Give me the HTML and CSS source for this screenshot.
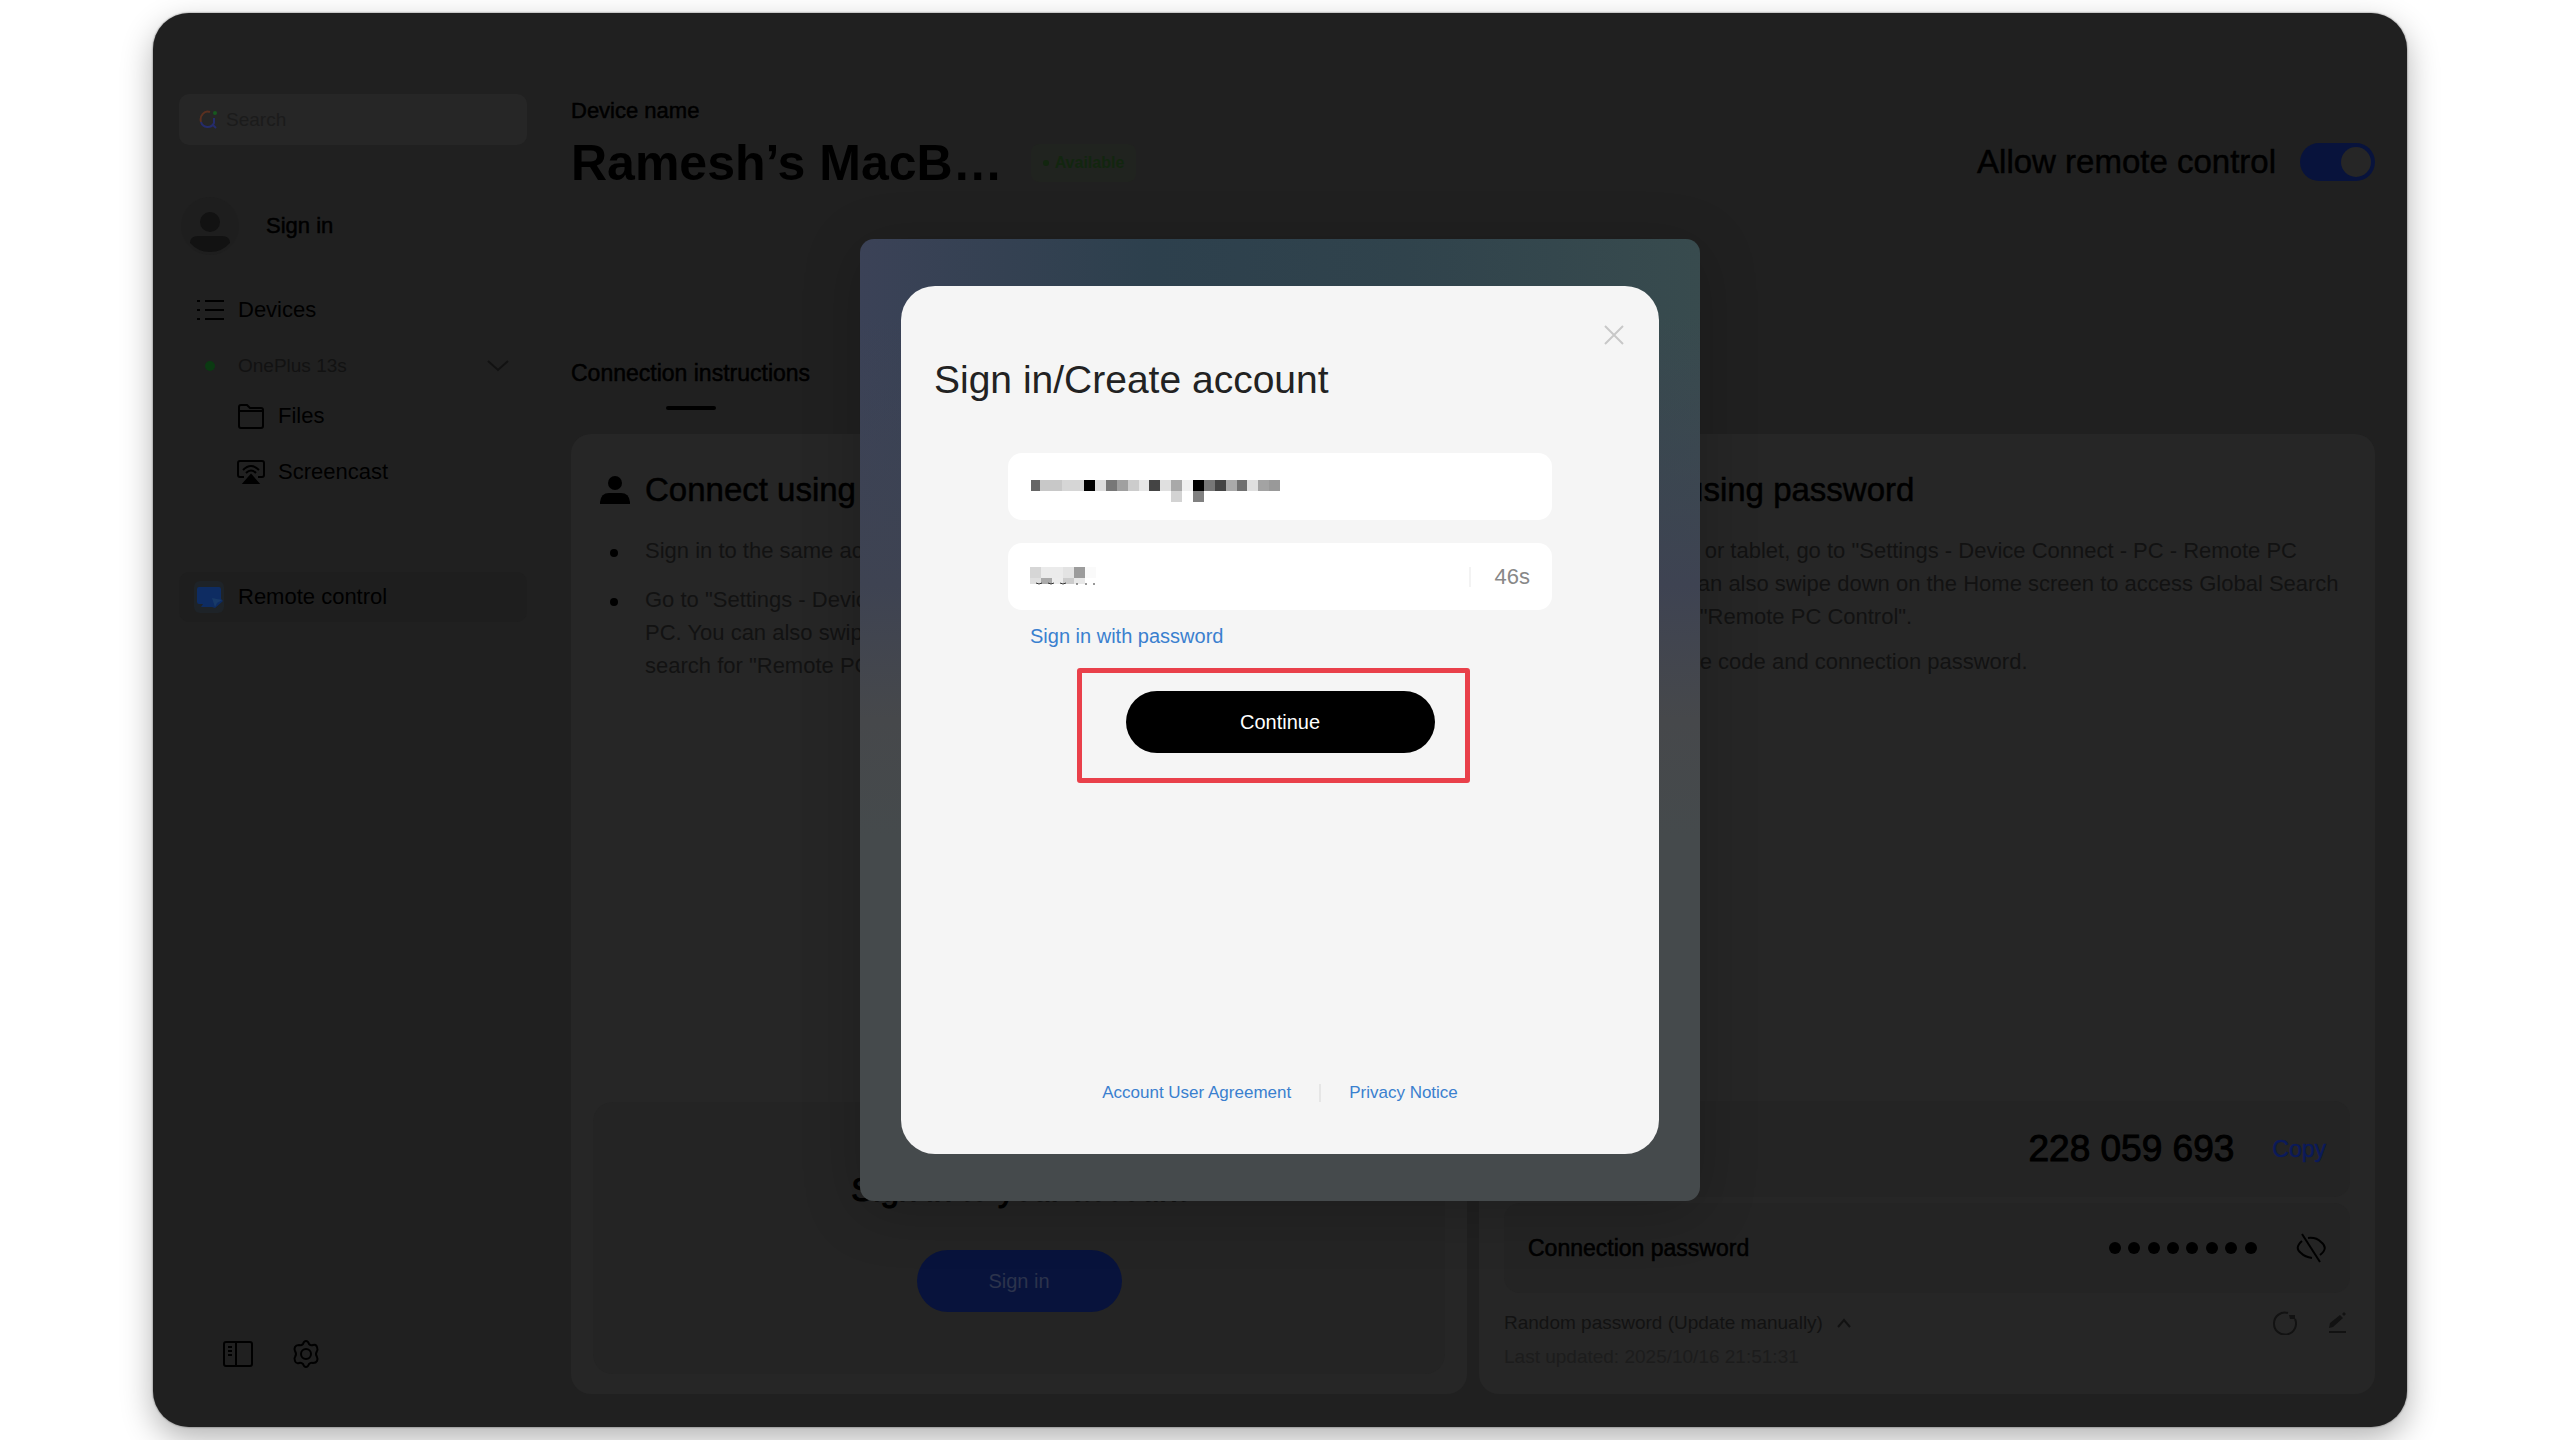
FILE: index.html
```html
<!DOCTYPE html>
<html lang="en">
<head>
    <meta charset="UTF-8">
    <meta name="viewport" content="width=device-width, initial-scale=1.0">
    <title>Remote control</title>
    <link rel="stylesheet" href="styles.css">
</head>
<body>
    <div class="window">
        <!-- Sidebar -->
        <aside class="sidebar">
            <label class="search">
                <svg width="20" height="20" viewBox="0 0 20 20" fill="none" stroke-width="2">
                    <path d="M12 2A7 8 0 0 0 3 12" stroke="#5a3020"/>
                    <path d="M3 12a7 7 0 0 0 13 1V8" stroke="#252c6b"/>
                    <path d="M15 15l3 3" stroke="#252c6b"/>
                    <circle cx="17" cy="3" r="1" stroke="#17581f"/>
                </svg>
                <input type="text" placeholder="Search" aria-label="Search">
            </label>

            <a class="account" href="#">
                <svg width="60" height="60" viewBox="0 0 60 60">
                    <circle cx="30" cy="30" r="29" fill="#1e1e1e"/>
                    <circle cx="30" cy="26" r="10" fill="#121212"/>
                    <path d="M10 47q0-7 8-7h24q8 0 8 7-8 9-20 9T10 47z" fill="#121212"/>
                </svg>
                <span>Sign in</span>
            </a>

            <nav class="menu">
                <a class="item" href="#">
                    <svg width="28" height="24" viewBox="0 0 28 24" stroke="#000" stroke-width="2">
                        <path d="M0 3h3M8 3h19M0 12h3M8 12h19M0 21h3M8 21h19"/>
                    </svg>
                    <span>Devices</span>
                </a>
                <a class="item device" href="#">
                    <i class="dot"></i>
                    <span>OnePlus 13s</span>
                    <svg class="arrow" width="22" height="12" viewBox="0 0 22 12" fill="none" stroke="#121212" stroke-width="2">
                        <path d="M1 1l10 9L21 1"/>
                    </svg>
                </a>
                <a class="item sub" href="#">
                    <svg width="28" height="26" viewBox="0 0 28 26" fill="none" stroke="#000" stroke-width="2">
                        <path d="M2 8V4q0-2 2-2h6l3 3h11q2 0 2 2v16q0 2-2 2H4q-2 0-2-2zM2 8h24"/>
                    </svg>
                    <span>Files</span>
                </a>
                <a class="item sub" href="#">
                    <svg width="28" height="26" viewBox="0 0 28 26" fill="none" stroke="#000" stroke-width="2">
                        <path d="M7 18H3q-2 0-2-2V4q0-2 2-2h22q2 0 2 2v12q0 2-2 2h-4"/>
                        <path d="M6 11q8-8 16 0M9 14q5-5 10 0"/>
                        <path d="M14 16l7 8H7z" fill="#000"/>
                    </svg>
                    <span>Screencast</span>
                </a>
                <a class="item active" href="#">
                    <svg width="32" height="32" viewBox="0 0 32 32">
                        <rect x="1" width="30" height="32" rx="6" fill="#1e2328"/>
                        <path d="M4 8q0-2 2-2h20q2 0 2 2v10l2 2-8 7-3-1H8l2-3H6q-2 0-2-2z" fill="#0e2c62"/>
                        <path d="M19 17l10 2-5 3-2 4z" fill="#183a68"/>
                    </svg>
                    <span>Remote control</span>
                </a>
            </nav>

            <div class="tools">
                <button type="button" aria-label="Toggle sidebar">
                    <svg width="30" height="28" viewBox="0 0 30 28" fill="none" stroke="#000" stroke-width="2">
                        <rect x="1" y="2" width="28" height="24" rx="2"/>
                        <path d="M13 2v24M5 7h4M5 11h4M5 15h4"/>
                    </svg>
                </button>
                <button type="button" aria-label="Settings">
                    <svg width="28" height="30" viewBox="0 0 28 30" fill="none" stroke="#000" stroke-width="2" stroke-linejoin="round">
                        <path d="M14 2q2 0 3 3 2 2 4 1 3-1 4 2t0 4q-2 3 0 6 1 2 0 4t-4 2q-2-1-4 1-1 3-3 3t-3-3q-2-2-4-1-3 1-4-2t0-4q2-3 0-6-1-2 0-4t4-2q2 1 4-1 1-3 3-3z"/>
                        <circle cx="14" cy="15" r="5"/>
                    </svg>
                </button>
            </div>
        </aside>

        <!-- Main -->
        <main class="main">
            <header class="header">
                <div>
                    <div class="label">Device name</div>
                    <div class="device-title">
                        <h1>Ramesh’s MacB…</h1>
                        <span class="badge"><i></i>Available</span>
                    </div>
                </div>
                <label class="allow">
                    <span>Allow remote control</span>
                    <input type="checkbox" checked>
                </label>
            </header>

            <div class="tabs">
                <a class="tab" href="#">Connection instructions</a>
            </div>

            <div class="cards">
                <section class="card">
                    <h2>
                        <svg width="30" height="30" viewBox="0 0 30 30">
                            <circle cx="15" cy="8" r="7"/>
                            <path d="M0 29v-2q1-9 9-9h12q8 0 9 9v2z"/>
                        </svg>
                        Connect using account
                    </h2>
                    <ul>
                        <li><p>Sign in to the same account on your phone or tablet.</p></li>
                        <li><p>Go to "Settings - Device Connect - PC - Remote<br>PC. You can also swipe down and<br>search for "Remote PC Control".</p></li>
                    </ul>
                    <div class="signin-box">
                        <h3>Sign in to your account</h3>
                        <button type="button">Sign in</button>
                    </div>
                </section>

                <section class="card card-password">
                    <h2>
                        <svg width="30" height="30" viewBox="0 0 30 30">
                            <rect x="3" y="12" width="24" height="17" rx="3"/>
                        </svg>
                        Connect using password
                    </h2>
                    <ul>
                        <li><p>On your phone or tablet, go to "Settings - Device Connect - PC - Remote PC<br>Control". You can also swipe down on the Home screen to access Global Search<br>and search for "Remote PC Control".</p></li>
                        <li><p>Enter the device code and connection password.</p></li>
                    </ul>
                    <div class="rows">
                        <div class="row row-code">
                            <span>Device code</span>
                            <strong>228 059 693</strong>
                            <button type="button" class="copy">Copy</button>
                        </div>
                        <div class="row">
                            <span>Connection password</span>
                            <svg class="mask" width="148" height="12" viewBox="0 0 148 12">
                                <circle cx="6" cy="6" r="6"/>
                                <circle cx="25" cy="6" r="6"/>
                                <circle cx="45" cy="6" r="6"/>
                                <circle cx="64" cy="6" r="6"/>
                                <circle cx="83" cy="6" r="6"/>
                                <circle cx="103" cy="6" r="6"/>
                                <circle cx="122" cy="6" r="6"/>
                                <circle cx="142" cy="6" r="6"/>
                            </svg>
                            <button type="button" aria-label="Show password">
                                <svg width="30" height="30" viewBox="0 0 30 30" fill="none" stroke="#000" stroke-width="2">
                                    <path d="M6 8Q-2 15 5 20q4 4 11 5M12 5q8-1 13 4 8 6-1 13"/>
                                    <path d="M6 1l18 28"/>
                                </svg>
                            </button>
                        </div>
                        <div class="meta">
                            <button type="button" class="random">
                                Random password (Update manually)
                                <svg width="14" height="10" viewBox="0 0 14 10" fill="none" stroke="#121212" stroke-width="2">
                                    <path d="M1 9l6-7 6 7"/>
                                </svg>
                            </button>
                            <button type="button" class="refresh" aria-label="Refresh password">
                                <svg width="24" height="24" viewBox="0 0 24 24" fill="none" stroke="#121212" stroke-width="2">
                                    <path d="M15 2A11 11 0 1 0 22 8"/>
                                    <path d="M16 4h6v4h-5z" fill="#121212" stroke="none"/>
                                </svg>
                            </button>
                            <button type="button" aria-label="Edit password">
                                <svg width="20" height="22" viewBox="0 0 20 22" fill="#121212">
                                    <path d="M2 16l1-5L13 3l3 3L6 15zM15 2l2-2 2 2-2 2z"/>
                                    <path d="M2 19h17v2H2z"/>
                                </svg>
                            </button>
                        </div>
                        <div class="updated">Last updated: 2025/10/16 21:51:31</div>
                    </div>
                </section>
            </div>
        </main>
    </div>

    <!-- Sign-in dialog -->
    <div class="overlay">
        <div class="modal" role="dialog" aria-label="Sign in/Create account">
            <form class="dialog">
                <button type="button" class="close" aria-label="Close">
                    <svg width="20" height="20" viewBox="0 0 20 20" stroke="#c8c8c8" stroke-width="2">
                        <path d="M1 1l18 18M19 1L1 19"/>
                    </svg>
                </button>
                <h2>Sign in/Create account</h2>

                <div class="field">
                    <input type="text" aria-label="Account">
                    <svg class="mosaic" width="250" height="22" viewBox="0 0 250 22" shape-rendering="crispEdges">
                        <path fill="#666" d="M0 0h9v11H0z"/>
                        <path fill="#c8c8c8" d="M9 0h22v11H9z"/>
                        <path fill="#d6d6d6" d="M31 0h22v11H31z"/>
                        <path fill="#000" d="M53 0h11v11H53z"/>
                        <path fill="#ddd" d="M64 0h11v11H64z"/>
                        <path fill="#777" d="M75 0h11v11H75z"/>
                        <path fill="#a0a0a0" d="M86 0h11v11H86z"/>
                        <path fill="#ccc" d="M97 0h11v11H97z"/>
                        <path fill="#e6e6e6" d="M108 0h10v11h-10z"/>
                        <path fill="#444" d="M118 0h11v11h-11z"/>
                        <path fill="#e0e0e0" d="M129 0h11v11h-11z"/>
                        <path fill="#a9a9a9" d="M140 0h11v11h-11z"/>
                        <path fill="#d3d3d3" d="M140 11h11v11h-11z"/>
                        <path fill="#f0f0f0" d="M151 0h11v11h-11z"/>
                        <path fill="#000" d="M162 0h11v11h-11z"/>
                        <path fill="#808080" d="M162 11h11v11h-11z"/>
                        <path fill="#777" d="M173 0h11v11h-11z"/>
                        <path fill="#444" d="M184 0h11v11h-11z"/>
                        <path fill="#aaa" d="M195 0h11v11h-11z"/>
                        <path fill="#707070" d="M206 0h10v11h-10z"/>
                        <path fill="#e0e0e0" d="M216 0h11v11h-11z"/>
                        <path fill="#a3a3a3" d="M227 0h11v11h-11z"/>
                        <path fill="#999" d="M238 0h11v11h-11z"/>
                    </svg>
                </div>

                <div class="field">
                    <input type="text" aria-label="Verification code">
                    <svg class="mosaic code" width="68" height="18" viewBox="0 0 68 18">
                        <path fill="#d6d6d6" d="M0 0h11v11H0z"/>
                        <path fill="#ebebeb" d="M11 0h22v11H11z"/>
                        <path fill="#e3e3e3" d="M33 0h11v11H33z"/>
                        <path fill="#9c9c9c" d="M44 0h11v11H44z"/>
                        <path fill="#fafafa" d="M55 0h11v11H55z"/>
                        <path fill="#e0e0e0" d="M0 11h11v6H0z"/>
                        <path fill="#aaa" d="M11 11h11v6H11z"/>
                        <path fill="#ececec" d="M22 11h11v6H22z"/>
                        <path fill="#ccc" d="M33 11h11v6H33z"/>
                        <path fill="#e8e8e8" d="M44 11h11v6H44z"/>
                        <path fill="none" stroke="#333" d="M6 16q3 2 6 0M18 16q3 2 6 0M30 16q3 2 6 0M46 17h2M55 17h2M63 17h2"/>
                    </svg>
                    <span class="countdown">46s</span>
                </div>

                <a class="switch" href="#">Sign in with password</a>

                <div class="submit">
                    <button type="submit">Continue</button>
                    <div class="highlight"></div>
                </div>

                <div class="links">
                    <a href="#">Account User Agreement</a>
                    <i></i>
                    <a href="#">Privacy Notice</a>
                </div>
            </form>
        </div>
    </div>
</body>
</html>
```

FILE: styles.css
```css
* {
    box-sizing: border-box;
    margin: 0;
    padding: 0;
    font-family: "Liberation Sans", Arial, sans-serif;
}

body {
    min-height: 100vh;
    padding: 13px 153px;
    background: #fff;
    color: #000;
    font-size: 22px;
    display: flex;
    overflow: hidden;
}

a {
    color: inherit;
    text-decoration: none;
}

button {
    background: none;
    border: none;
    color: inherit;
    font-size: 20px;
    cursor: pointer;
}

svg {
    display: block;
    flex-shrink: 0;
}

.window {
    flex: 1;
    display: flex;
    background: #202020;
    border-radius: 36px;
    box-shadow: 0 0 2px rgba(0, 0, 0, 0.6), 0 12px 32px rgba(0, 0, 0, 0.3);
}

/* sidebar */
.sidebar {
    width: 418px;
    padding: 81px 44px 58px 26px;
    display: flex;
    flex-direction: column;
}

.search {
    display: flex;
    align-items: center;
    gap: 8px;
    height: 51px;
    padding: 0 19px;
    background: #262626;
    border-radius: 10px;
}

.search input {
    width: 100%;
    border: none;
    outline: none;
    background: none;
    font-size: 19px;
}

.search input::placeholder {
    color: #1b1b1b;
}

.account {
    display: flex;
    align-items: center;
    gap: 26px;
    margin-top: 51px;
    margin-left: 1px;
    height: 60px;
    -webkit-text-stroke: 0.5px #000;
}

.menu {
    display: flex;
    flex-direction: column;
    margin-top: 28px;
}

.item {
    display: flex;
    align-items: center;
    height: 52px;
    padding-left: 18px;
    gap: 13px;
}

.item.device {
    height: 56px;
    margin-top: 2px;
    padding: 0 18px 0 26px;
    gap: 23px;
    color: #121212;
    font-size: 19px;
}

.dot {
    width: 10px;
    height: 10px;
    border-radius: 50%;
    background: #0b3a12;
}

.arrow {
    margin-left: auto;
}

.item.sub {
    height: 56px;
    padding-left: 58px;
    margin-top: -6px;
    margin-bottom: 6px;
}

.item.active {
    height: 50px;
    margin-top: 66px;
    padding-left: 14px;
    background: #1e1e1e;
    border-radius: 10px;
}

.tools {
    display: flex;
    align-items: center;
    gap: 39px;
    margin-top: auto;
    padding-left: 44px;
}

/* main */
.main {
    flex: 1;
    min-width: 0;
    padding: 84px 32px 33px 0;
    display: flex;
    flex-direction: column;
}

.header {
    display: flex;
    justify-content: space-between;
    align-items: flex-end;
}

.label {
    line-height: 28px;
    -webkit-text-stroke: 0.5px #000;
}

.device-title {
    display: flex;
    align-items: center;
    gap: 28px;
    margin-top: 8px;
}

h1 {
    font-size: 50px;
    line-height: 60px;
}

.badge {
    display: flex;
    align-items: center;
    gap: 6px;
    height: 38px;
    padding: 0 12px;
    background: #20231f;
    border-radius: 8px;
    color: #12260f;
    font-size: 16px;
    font-weight: bold;
}

.badge i {
    width: 6px;
    height: 6px;
    border-radius: 50%;
    background: #12260f;
}

.allow {
    display: flex;
    align-items: center;
    gap: 24px;
    height: 62px;
    font-size: 33px;
    -webkit-text-stroke: 0.5px #000;
}

.allow input {
    appearance: none;
    display: flex;
    justify-content: flex-end;
    width: 75px;
    height: 38px;
    padding: 4px;
    border-radius: 19px;
    background: #08133c;
}

.allow input::before {
    content: "";
    width: 30px;
    height: 30px;
    border-radius: 50%;
    background: #262626;
}

.tabs {
    display: flex;
    margin-top: 165px;
}

.tab {
    display: flex;
    flex-direction: column;
    align-items: center;
    gap: 18px;
    font-size: 23px;
    line-height: 30px;
    -webkit-text-stroke: 0.5px #000;
}

.tab::after {
    content: "";
    width: 50px;
    height: 4px;
    border-radius: 2px;
    background: #000;
}

.cards {
    flex: 1;
    display: grid;
    grid-template-columns: 1fr 1fr;
    gap: 12px;
    margin-top: 24px;
}

.card {
    display: flex;
    flex-direction: column;
    padding: 36px 22px 20px;
    background: #262626;
    border-radius: 20px;
}

.card h2 {
    display: flex;
    align-items: center;
    gap: 15px;
    padding-left: 7px;
    font-size: 33px;
    font-weight: normal;
    line-height: 40px;
    -webkit-text-stroke: 0.5px #000;
}

.card ul {
    display: flex;
    flex-direction: column;
    gap: 16px;
    margin-top: 24px;
    list-style: none;
}

.card li {
    display: flex;
    gap: 27px;
    padding-left: 17px;
    color: #121212;
    line-height: 33px;
    white-space: nowrap;
}

.card li::before {
    content: "";
    width: 8px;
    height: 8px;
    margin-top: 15px;
    border-radius: 50%;
    background: #000;
}

.card-password ul {
    gap: 12px;
}

.signin-box {
    display: flex;
    flex-direction: column;
    align-items: center;
    gap: 40px;
    margin-top: auto;
    padding: 68px 20px 62px;
    background: #242424;
    border-radius: 20px;
}

.signin-box h3 {
    font-size: 33px;
    font-weight: normal;
    line-height: 40px;
    -webkit-text-stroke: 1px #000;
}

.signin-box button {
    width: 205px;
    height: 62px;
    border-radius: 31px;
    background: #08133c;
    color: #2c334c;
}

.rows {
    margin-top: auto;
    padding: 0 3px;
}

.row {
    display: flex;
    align-items: center;
    height: 90px;
    padding: 0 24px;
    background: #242424;
    border-radius: 16px;
    font-size: 23px;
    -webkit-text-stroke: 0.5px #000;
}

.row-code {
    height: 96px;
    margin-bottom: 6px;
}

.row strong {
    margin-left: auto;
    font-size: 37px;
    font-weight: normal;
    -webkit-text-stroke: 1px #000;
}

.row .copy {
    margin-left: 38px;
    color: #0b1a5a;
    font-size: 23px;
    -webkit-text-stroke: 0.5px #0b1a5a;
}

.mask {
    margin-left: auto;
    margin-right: 39px;
}

.meta {
    display: flex;
    align-items: center;
    height: 34px;
    margin-top: 13px;
    padding-right: 3px;
    color: #121212;
}

.meta .random {
    display: flex;
    align-items: center;
    gap: 14px;
    font-size: 19px;
}

.meta .refresh {
    margin-left: auto;
    margin-right: 30px;
}

.updated {
    color: #1c1c1c;
    font-size: 19px;
    line-height: 34px;
}

/* sign-in dialog */
.overlay {
    position: fixed;
    inset: 0;
    display: flex;
    align-items: center;
    justify-content: center;
}

.modal {
    width: 840px;
    padding: 47px 41px;
    border-radius: 14px;
    background:
        linear-gradient(rgba(62, 67, 82, 0) 8%, #3e4352 36%, #46484b 50%, #454a4c 62%),
        linear-gradient(90deg, #3b4257, #2d404d 35%, #30434c 65%, #384b4e);
    box-shadow: 0 10px 60px rgba(0, 0, 0, 0.2);
}

.dialog {
    position: relative;
    display: flex;
    flex-direction: column;
    min-height: 868px;
    padding: 64px 107px 46px;
    border-radius: 34px;
    background: #f5f5f5;
}

.close {
    position: absolute;
    top: 39px;
    right: 35px;
}

.dialog h2 {
    margin-left: -74px;
    color: #222;
    font-size: 39px;
    font-weight: normal;
    line-height: 60px;
}

.field {
    position: relative;
    height: 67px;
    margin-top: 23px;
}

.dialog h2 + .field {
    margin-top: 43px;
}

.field input {
    width: 100%;
    height: 100%;
    padding: 0 22px;
    border: none;
    outline: none;
    border-radius: 14px;
    background: #fff;
    font-size: 22px;
}

.mosaic {
    position: absolute;
    top: 27px;
    left: 23px;
}

.mosaic.code {
    top: 24px;
    left: 22px;
}

.countdown {
    position: absolute;
    top: 24px;
    right: 22px;
    padding-left: 24px;
    border-left: 2px solid #f3f3f3;
    color: #888;
    line-height: 20px;
}

.switch {
    margin: 14px 0 0 22px;
    color: #3a80cf;
    font-size: 20px;
    line-height: 24px;
}

.submit {
    position: relative;
    display: flex;
    justify-content: center;
    margin-top: 43px;
}

.submit button {
    width: 309px;
    height: 62px;
    border-radius: 31px;
    background: #000;
    color: #fff;
}

.highlight {
    position: absolute;
    top: -23px;
    left: 69px;
    width: 393px;
    height: 115px;
    border: 5px solid #e9404a;
    border-radius: 3px;
    pointer-events: none;
}

.links {
    display: flex;
    align-items: center;
    justify-content: center;
    gap: 28px;
    margin-top: auto;
    color: #3a80cf;
    font-size: 17px;
    line-height: 30px;
}

.links i {
    width: 2px;
    height: 18px;
    background: #e6e6e6;
}
```
